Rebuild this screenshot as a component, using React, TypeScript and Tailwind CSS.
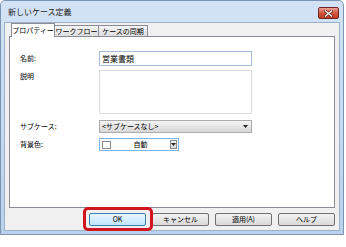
import React from "react";

const labels = ["名前:", "説明", "サブケース:", "背景色:"];

function CloseButton() {
  return (
    <div className="mt-[6px] flex h-[12px] w-[21px] items-center justify-center rounded-[2px] border border-[#6e2a22] bg-gradient-to-b from-[#e8a493] via-[#d2553f] to-[#c23b23]">
      <svg width="9" height="7" viewBox="0 0 9 7">
        <path d="M1.5 1 L7.5 6 M7.5 1 L1.5 6" stroke="#5a1d14" strokeWidth="2.6" strokeLinecap="square" />
        <path d="M1.5 1 L7.5 6 M7.5 1 L1.5 6" stroke="#ffffff" strokeWidth="1.4" strokeLinecap="square" />
      </svg>
    </div>
  );
}

function DropArrow() {
  return (
    <svg width="5" height="3" viewBox="0 0 5 3">
      <path d="M0 0 H5 L2.5 3 Z" fill="#222" />
    </svg>
  );
}

function Tab({ label, active, width }: { label: string; active?: boolean; width: string }) {
  if (active) {
    return (
      <div
        className={`-mb-px flex h-[14px] items-center justify-center border border-b-0 border-[#898c95] bg-white text-[7px] ${width}`}
      >
        {label}
      </div>
    );
  }
  return (
    <div
      className={`flex h-[11px] items-center justify-center border border-b-0 border-l-0 border-[#898c95] bg-gradient-to-b from-[#f4f4f4] to-[#dedede] text-[7px] ${width}`}
    >
      {label}
    </div>
  );
}

function DialogButton({ label, primary }: { label: string; primary?: boolean }) {
  return (
    <div
      className={`flex h-[13px] w-[57px] items-center justify-center rounded-[2px] border text-[7px] ${
        primary
          ? "border-[#3c7fb1] bg-gradient-to-b from-[#eaf6fd] to-[#bee6fd]"
          : "border-[#707070] bg-gradient-to-b from-[#f2f2f2] to-[#dadada]"
      }`}
    >
      {label}
    </div>
  );
}

export default function App() {
  return (
    <div className="relative h-[247px] w-[346px] bg-white font-['Noto_Sans_CJK_JP','Liberation_Sans',sans-serif] text-black">
      <div className="flex h-[235px] w-[344px] flex-col rounded-t-[5px] border border-[#7c94b3] bg-gradient-to-b from-[#d3e3f5] to-[#bad2eb]">
        {/* title bar */}
        <div className="flex h-[21px] justify-between pl-[7px] pr-[4px]">
          <span className="pt-[7px] text-[8px] leading-none text-[#1e1e1e]">新しいケース定義</span>
          <CloseButton />
        </div>

        {/* client area */}
        <div className="mx-[3px] flex h-[209px] flex-col border border-[#9bb0cb] bg-[#f0f0f0]">
          <div className="relative z-10 flex h-[13px] items-end pl-[6px]">
            <Tab label="プロパティー" active width="w-[44px]" />
            <Tab label="ワークフロー" width="w-[44px]" />
            <Tab label="ケースの同期" width="w-[49px]" />
          </div>

          <div className="mx-[4px] h-[172px] border border-[#898c95] bg-white pl-[10px] pt-[14px]">
            <div className="flex h-[15px] items-center">
              <span className="w-[79px] text-[7px]">{labels[0]}</span>
              <div className="flex h-[15px] w-[153px] items-center border border-[#a4bcd9] pl-[2px] text-[8px]">
                営業書類
              </div>
            </div>
            <div className="mt-[4px] flex h-[44px] items-start">
              <span className="w-[79px] pt-[1px] text-[7px]">{labels[1]}</span>
              <div className="h-[44px] w-[153px] border border-[#dcdcdc]" />
            </div>
            <div className="mt-[6px] flex h-[13px] items-center">
              <span className="w-[79px] text-[7px]">{labels[2]}</span>
              <div className="flex h-[13px] w-[153px] items-center justify-between border border-[#acacac] bg-gradient-to-b from-[#f3f3f3] to-[#d8d8d8] pl-[2px] pr-[3px] text-[7px]">
                <span>&lt;サブケースなし&gt;</span>
                <DropArrow />
              </div>
            </div>
            <div className="mt-[5px] flex h-[13px] items-center">
              <span className="w-[79px] text-[7px]">{labels[3]}</span>
              <div className="flex h-[13px] w-[80px] items-center border border-[#7eb4ea] bg-white pl-[2px] pr-px">
                <div className="h-[8px] w-[9px] border border-[#8a8a8a] bg-white" />
                <span className="flex-1 text-center text-[7px]">自動</span>
                <div className="flex h-[9px] w-[7px] items-center justify-center border border-[#8a8a8a] bg-gradient-to-b from-[#f4f4f4] to-[#d6d6d6]">
                  <DropArrow />
                </div>
              </div>
            </div>
          </div>

          <div className="mt-[5px] flex gap-[6px] pl-[84px]">
            <DialogButton label="OK" primary />
            <DialogButton label="キャンセル" />
            <DialogButton label="適用(A)" />
            <DialogButton label="ヘルプ" />
          </div>
        </div>
      </div>

      {/* red annotation around OK */}
      <div className="absolute left-[83px] top-[207px] h-[24px] w-[70px] rounded-[5px] border-[3px] border-[#d2141e]" />
    </div>
  );
}
